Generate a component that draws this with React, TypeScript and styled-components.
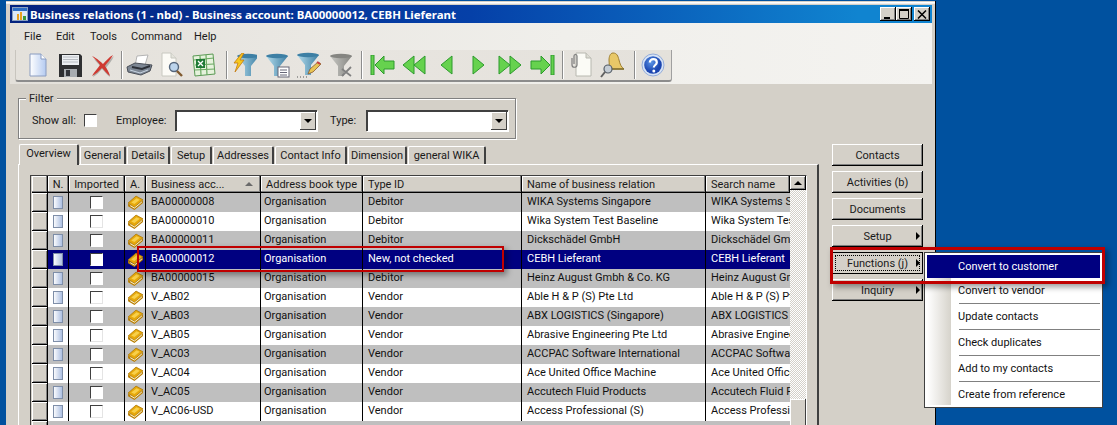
import React from "react";
import styled, { createGlobalStyle } from "styled-components";

const Global = createGlobalStyle`
  html, body { margin: 0; padding: 0; background: #00519f; overflow: hidden; }
  * { box-sizing: border-box; }
  body { font-family: Roboto, "Liberation Sans", sans-serif; font-size: 11px; color: #000; }
`;

const Desktop = styled.div`
  position: relative;
  width: 1117px;
  height: 425px;
  overflow: hidden;
  background: #00519f;
  padding: 1px 0 0 6px;
`;
const Win = styled.div`
  width: 930px;
  height: 460px;
  background: #d4d0c8;
  border-right: 1px solid #000;
  padding: 4px 3px 0 4px;
  box-shadow: inset 0 1px #d4d0c8, inset 0 2px #fff, inset 0 3px #f0f0f0;
`;
const TitleBar = styled.div`
  height: 18px;
  display: flex;
  align-items: center;
  padding: 0 2px 0 2px;
  background: linear-gradient(90deg, #04237f 0%, #0540a8 50%, #1084d0 92%);
`;
const TitleText = styled.span`
  flex: 1;
  margin-left: 2px;
  color: #fff;
  font: 700 11.45px "Noto Sans", sans-serif;
  white-space: nowrap;
`;
const CaptionBtn = styled.button<{ $gap?: number }>`
  width: 16px;
  height: 14px;
  padding: 0;
  margin-left: ${(p) => p.$gap ?? 0}px;
  border: 0;
  background: #d4d0c8;
  box-shadow: inset -1px -1px #000, inset 1px 1px #fff, inset -2px -2px #808080;
  display: flex;
  align-items: center;
  justify-content: center;
`;
const Chrome = styled.div`
  background: linear-gradient(90deg, #e3e0da 0%, #f0efeb 60%, #f4f3f0 100%);
  height: 61px;
`;
const MenuBar = styled.div`
  height: 27px;
  display: flex;
  align-items: center;
  padding-left: 14px;
`;
const MenuLabel = styled.span<{ $w: number }>`
  width: ${(p) => p.$w}px;
  color: #1a1a1a;
`;
const ToolBar = styled.div`
  width: 657px;
  height: 32px;
  margin-left: 5px;
  display: flex;
  align-items: center;
  padding-left: 6px;
  background: linear-gradient(90deg, #e4e1db, #e8e5e0 50%, #e4e1db);
  border-right: 1px solid #a0a0a0;
  border-bottom: 2px solid #8c8c8c;
  border-left: 1px solid #c8c5be;
  border-radius: 0 0 3px 3px;
`;
const ToolSlot = styled.span`
  width: 32px;
  height: 28px;
  display: flex;
  align-items: center;
  justify-content: center;
  flex: none;
`;
const ToolSep = styled.span<{ $before: number; $after: number }>`
  width: 2px;
  height: 28px;
  flex: none;
  margin: 0 ${(p) => p.$after}px 0 ${(p) => p.$before}px;
  border-left: 1px solid #8c8c8c;
  border-right: 1px solid #fff;
`;
const Body = styled.div`
  display: flex;
  padding: 8px 0 0 8px;
`;
const LeftCol = styled.div`
  width: 801px;
  flex: none;
`;
const FilterBox = styled.fieldset`
  width: 498px;
  height: 47px;
  margin: 0 0 5px;
  padding: 0 0 0 13px;
  border: 1px solid #808080;
  box-shadow: 1px 1px #fff, inset 1px 1px #fff;
  display: flex;
  align-items: center;
`;
const FilterLegend = styled.legend`
  margin-left: -6px;
  padding: 0 3px;
  line-height: 13px;
  background: #d4d0c8;
  color: #222;
`;
const FilterRow = styled.div`
  display: flex;
  align-items: center;
  margin-top: -3px;
`;
const FieldLabel = styled.span<{ $w: number }>`
  width: ${(p) => p.$w}px;
  color: #1a1a1a;
`;
const Check = styled.span<{ $soft?: boolean }>`
  display: block;
  width: 13px;
  height: 13px;
  background: #fff;
  border-top: 1px solid #404040;
  border-left: 1px solid #404040;
  border-right: 1px solid ${(p) => (p.$soft ? "#e4e4e4" : "#fff")};
  border-bottom: 1px solid ${(p) => (p.$soft ? "#e4e4e4" : "#fff")};
`;
const Combo = styled.div<{ $mr: number }>`
  width: 142px;
  height: 21px;
  margin-right: ${(p) => p.$mr}px;
  background: #fff;
  border-top: 2px solid #404040;
  border-left: 2px solid #404040;
  box-shadow: 1px 1px #fff;
  display: flex;
  justify-content: flex-end;
  padding: 0 1px 1px 0;
`;
const ComboBtn = styled.span`
  width: 16px;
  background: #d4d0c8;
  box-shadow: inset -1px -1px #404040, inset 1px 1px #fff;
  display: flex;
  align-items: center;
  justify-content: center;
`;
const DownGlyph = styled.span`
  width: 0;
  height: 0;
  border-left: 4px solid transparent;
  border-right: 4px solid transparent;
  border-top: 4px solid #000;
`;
const Tabs = styled.div`
  height: 20px;
  display: flex;
  align-items: flex-end;
  padding-left: 1px;
`;
const Tab = styled.div<{ $w: number; $on?: boolean }>`
  width: ${(p) => p.$w}px;
  height: ${(p) => (p.$on ? 21 : 18)}px;
  margin-right: 1px;
  padding-top: 1px;
  text-align: center;
  line-height: 15px;
  color: #1a1a1a;
  white-space: nowrap;
  background: #d4d0c8;
  border-top: 1px solid #fff;
  border-left: 1px solid #fff;
  border-right: 2px solid #404040;
  border-radius: 2px 2px 0 0;
  ${(p) => (p.$on ? "margin-bottom:-1px; position:relative; z-index:1;" : "")}
`;
const Pane = styled.div`
  height: 270px;
  padding: 10px 0 0 11px;
  border-top: 1px solid #fff;
  border-left: 1px solid #fff;
  border-right: 2px solid #404040;
`;
const GridFrame = styled.div`
  display: flex;
  width: 777px;
  height: 260px;
  border-top: 1px solid #404040;
  border-left: 1px solid #404040;
  border-right: 1px solid #fff;
  padding-left: 1px;
`;
const GridBody = styled.div`
  width: 758px;
  flex: none;
  overflow: hidden;
`;
const COLS = "16px 21px 56px 21px 115px 102px 159px 184px 84px";
const HeadRow = styled.div`
  display: grid;
  grid-template-columns: ${COLS};
  height: 17px;
  background: #000;
`;
const HeadCell = styled.div<{ $center?: boolean; $pad?: number }>`
  position: relative;
  background: #d4d0c8;
  height: 16px;
  margin-right: 1px;
  box-shadow: inset -1px -1px #808080, inset 1px 1px #fff;
  line-height: 18px;
  color: #1a1a1a;
  white-space: nowrap;
  overflow: hidden;
  padding-left: ${(p) => p.$pad ?? 5}px;
  text-align: ${(p) => (p.$center ? "center" : "left")};
  ${(p) => (p.$center ? "padding-left:0;" : "")}
`;
const SortMark = styled.span`
  position: absolute;
  right: 7px;
  top: 6px;
  width: 0;
  height: 0;
  border-left: 4px solid transparent;
  border-right: 4px solid transparent;
  border-bottom: 4px solid #6a6a6a;
`;
const Row = styled.div<{ $kind: "odd" | "even" | "sel" }>`
  display: grid;
  grid-template-columns: ${COLS};
  height: 19px;
  color: ${(p) => (p.$kind === "sel" ? "#fff" : "#111")};
  background: ${(p) => (p.$kind === "odd" ? "#bfbfbf" : p.$kind === "even" ? "#fff" : "#000080")};
`;
const RowHead = styled.div`
  background: #d4d0c8;
  box-shadow: inset -1px -1px #000, inset 1px 1px #fff, inset -2px -2px #808080;
`;
const IconCell = styled.div`
  border-right: 1px solid #000;
  display: flex;
  align-items: center;
  justify-content: center;
`;
const TextCell = styled.div<{ $pad?: number; $open?: boolean }>`
  ${(p) => (p.$open ? "" : "border-right: 1px solid #000;")}
  padding-left: ${(p) => p.$pad ?? 5}px;
  line-height: 18px;
  white-space: nowrap;
  overflow: hidden;
`;
const Scroll = styled.div`
  width: 16px;
  flex: none;
  display: flex;
  flex-direction: column;
  background-color: #fff;
  background-image: conic-gradient(#d4d0c8 25%, #fff 0 50%, #d4d0c8 0 75%, #fff 0);
  background-size: 2px 2px;
`;
const ScrollBtn = styled.div`
  height: 16px;
  background: #d4d0c8;
  box-shadow: inset -1px -1px #000, inset 1px 1px #fff, inset -2px -2px #808080;
  display: flex;
  align-items: center;
  justify-content: center;
`;
const UpGlyph = styled.span`
  width: 0;
  height: 0;
  border-left: 4px solid transparent;
  border-right: 4px solid transparent;
  border-bottom: 4px solid #000;
`;
const ScrollThumb = styled.div`
  height: 40px;
  margin-top: 209px;
  background: #d4d0c8;
  box-shadow: inset -1px -1px #404040, inset 1px 1px #fff;
`;
const SideCol = styled.div`
  width: 91px;
  margin: 52px 0 0 13px;
  display: flex;
  flex-direction: column;
  gap: 5px;
`;
const SideBtn = styled.div<{ $focus?: boolean }>`
  position: relative;
  height: 22px;
  background: #d4d0c8;
  box-shadow: ${(p) =>
    p.$focus
      ? "inset 0 0 0 1px #000"
      : "inset -1px -1px #000, inset 1px 1px #fff, inset -2px -2px #808080"};
  line-height: 23px;
  text-align: center;
  color: #1a1a1a;
  &::after {
    content: "";
    display: ${(p) => (p.$focus ? "block" : "none")};
    position: absolute;
    inset: 3px;
    border: 1px dotted #000;
  }
`;
const SideArrow = styled.span`
  position: absolute;
  right: 3px;
  top: 7px;
  width: 0;
  height: 0;
  border-top: 4px solid transparent;
  border-bottom: 4px solid transparent;
  border-left: 4px solid #000;
`;
const PopMenu = styled.div`
  position: absolute;
  left: 924px;
  top: 252px;
  width: 179px;
  height: 156px;
  padding: 2px;
  border: 1px solid #404040;
  background-color: #fff;
  background-image: linear-gradient(90deg, #fff, #d6d3cb);
  background-repeat: no-repeat;
  background-size: 24px 150px;
  background-position: 2px 2px;
  color: #111;
`;
const PopItem = styled.div<{ $on?: boolean }>`
  height: ${(p) => (p.$on ? 23 : 25)}px;
  line-height: ${(p) => (p.$on ? 24 : 26)}px;
  padding-left: 31px;
  white-space: nowrap;
  ${(p) => (p.$on ? "background:#000080; color:#fff;" : "")}
`;
const PopSep = styled.div`
  height: 1px;
  margin-left: 32px;
  background: #808080;
`;
const RedBox = styled.div<{ $x: number; $y: number; $w: number; $h: number; $t: number }>`
  position: absolute;
  left: ${(p) => p.$x}px;
  top: ${(p) => p.$y}px;
  width: ${(p) => p.$w}px;
  height: ${(p) => p.$h}px;
  border: ${(p) => p.$t}px solid #c00000;
  box-shadow: 3px 3px 6px rgba(0, 0, 0, 0.4);
  pointer-events: none;
`;

const NewDocIcon = () => (
  <svg width="24" height="26" viewBox="0 0 24 26">
    <defs><linearGradient id="nd" x1="0" x2="1"><stop offset="0" stopColor="#fff" /><stop offset="1" stopColor="#b4caf0" /></linearGradient></defs>
    <path d="M4 2h11l5 5v17H4z" fill="url(#nd)" stroke="#8a9cc0" />
    <path d="M15 2v5h5" fill="#fff" stroke="#8a9cc0" />
  </svg>
);
const SaveIcon = () => (
  <svg width="25" height="25" viewBox="0 0 25 25">
    <path d="M1 1h21l2 2v21H1z" fill="#2f3032" />
    <path d="M4 2h17v10H4z" fill="#eceff2" />
    <path d="M5 4h15M5 6.500h15M5 9h15" stroke="#b8bcc2" />
    <path d="M6 16h13v8H6z" fill="#a8acb0" />
    <path d="M8 17h4v6H8z" fill="#33353a" />
  </svg>
);
const DeleteIcon = () => (
  <svg width="26" height="24" viewBox="0 0 26 24">
    <path d="M4 5c5 2 8 5 10 7 3-3 6-7 10-10-2 5-6 9-8 12 2 3 3 5 4 9-3-2-6-6-8-8-3 3-5 6-9 8 1-4 5-8 7-11C9 10 6 8 4 5z" fill="#b0b0ac" transform="translate(1 1)" />
    <path d="M3 3c6 3 9 6 11 8 3-3 6-7 10-9-2 4-6 8-8 11 2 3 4 6 5 10-3-2-6-6-8-8-3 3-6 6-10 8 2-4 6-8 8-11C9 9 6 6 3 3z" fill="#cf3a32" />
  </svg>
);
const PrintIcon = () => (
  <svg width="28" height="24" viewBox="0 0 28 24">
    <path d="M11 3l11-1-3 10-10 1z" fill="#fff" stroke="#b4b4b4" />
    <path d="M1 14l8-4 17 2-2 6-9 4-13-3z" fill="#7d8794" stroke="#4a4f58" />
    <path d="M6 14l10 2 8-3" fill="none" stroke="#2c3038" strokeWidth="2" />
    <path d="M4 17l10 3 8-3" fill="none" stroke="#c8d4e2" />
  </svg>
);
const PreviewIcon = () => (
  <svg width="24" height="26" viewBox="0 0 24 26">
    <path d="M2 1h9l5 5v18H2z" fill="#fcfbf6" stroke="#c8c8c0" />
    <path d="M11 1v5h5" fill="#e4e4dc" stroke="#c8c8c0" />
    <circle cx="14" cy="15" r="4.500" fill="#bcd4ec" stroke="#55667c" strokeWidth="1.400" />
    <path d="M17 19l5 5" stroke="#805a30" strokeWidth="2.400" />
  </svg>
);
const ExcelIcon = () => (
  <svg width="24" height="25" viewBox="0 0 24 25">
    <path d="M1 3l20-2 2 20-20 2z" fill="#e6f2dc" stroke="#5b9a55" />
    <path d="M2 7l20-2M3 12l19-1M3 17l20-1M8 3l1 19M14 2l1 20" stroke="#68a860" strokeWidth="1.200" />
    <path d="M4 6h9v9H4z" fill="#1f7a35" />
    <path d="M6 8l5 5M11 8l-5 5" stroke="#fff" strokeWidth="1.300" />
  </svg>
);
const Funnel = ({ c1 = "#3d7fa4", c2 = "#b4dcec", id }: { c1?: string; c2?: string; id: string }) => (
  <>
    <defs><linearGradient id={id} x1="0" x2="1"><stop offset="0" stopColor={c2} /><stop offset="1" stopColor={c1} /></linearGradient></defs>
    <path d="M1 3h22l-8 10v10h-6V13z" fill={`url(#${id})`} />
    <ellipse cx="12" cy="3" rx="11" ry="2.200" fill={c1} />
  </>
);
const FilterBoltIcon = () => (
  <svg width="24" height="24" viewBox="0 0 24 24">
    <g transform="translate(3 0)"><Funnel id="fa" /></g>
    <path d="M9 0L1 10h4l-3 9 9-12H7l4-7z" fill="#f6c81e" stroke="#c47a10" strokeWidth=".8" />
  </svg>
);
const FilterFormIcon = () => (
  <svg width="25" height="25" viewBox="0 0 25 25">
    <Funnel id="fb" />
    <rect x="13" y="14" width="11" height="10" fill="#fff" stroke="#667" />
    <path d="M15 17h7M15 19.500h7M15 22h7" stroke="#667" />
  </svg>
);
const FilterEditIcon = () => (
  <svg width="26" height="26" viewBox="0 0 26 26">
    <Funnel id="fc" />
    <path d="M12 22l2-5 8-7 3 2-8 8z" fill="#e8c454" stroke="#8a5a30" strokeWidth=".8" />
    <path d="M21 10l3 2" stroke="#c83c3c" strokeWidth="2" />
    <path d="M1 25h10" stroke="#555" strokeDasharray="1 2" />
  </svg>
);
const FilterOffIcon = () => (
  <svg width="24" height="25" viewBox="0 0 24 25">
    <Funnel id="fd" c1="#858581" c2="#c8c8c4" />
    <path d="M13 16l9 7M22 14l-9 9" stroke="#808080" strokeWidth="1.800" />
  </svg>
);
const G = { fill: "#66d24e", stroke: "#2c9a2c", strokeWidth: 1 };
const FirstIcon = () => (
  <svg width="25" height="20" viewBox="0 0 25 20">
    <path d="M1 0h3v20H1z" {...G} />
    <path d="M5 10l9-9v5h10v8H14v5z" {...G} />
  </svg>
);
const PrevPageIcon = () => (
  <svg width="24" height="20" viewBox="0 0 24 20">
    <path d="M1 10L12 1v18z" {...G} /><path d="M12 10L23 1v18z" {...G} />
  </svg>
);
const PrevIcon = () => (
  <svg width="13" height="20" viewBox="0 0 13 20"><path d="M1 10L12 1v18z" {...G} /></svg>
);
const NextIcon = () => (
  <svg width="13" height="20" viewBox="0 0 13 20"><path d="M12 10L1 1v18z" {...G} /></svg>
);
const NextPageIcon = () => (
  <svg width="24" height="20" viewBox="0 0 24 20">
    <path d="M12 10L1 1v18z" {...G} /><path d="M23 10L12 1v18z" {...G} />
  </svg>
);
const LastIcon = () => (
  <svg width="25" height="20" viewBox="0 0 25 20">
    <path d="M21 0h3v20h-3z" {...G} />
    <path d="M20 10l-9-9v5H1v8h10v5z" {...G} />
  </svg>
);
const AttachIcon = () => (
  <svg width="22" height="26" viewBox="0 0 22 26">
    <path d="M6 1h10l5 5v18H6z" fill="#fbfbf6" stroke="#b8b8b0" />
    <path d="M16 1v5h5" fill="#dcdcd4" stroke="#b8b8b0" />
    <path d="M2 6v7c0 3 5 3 5 0V4c0-2-3-2-3 0v8" fill="none" stroke="#7c7c7c" strokeWidth="1.200" />
  </svg>
);
const BellIcon = () => (
  <svg width="26" height="26" viewBox="0 0 26 26">
    <path d="M13 1c4 0 5 3 6 7s2 7 5 9H8c2-3 1-6 1-9s1-7 4-7z" fill="#e8c868" stroke="#a08030" />
    <path d="M8 17h16" stroke="#807030" strokeWidth="1.500" />
    <circle cx="8" cy="17" r="4" fill="#c4ccd4" stroke="#555e68" strokeWidth="1.200" />
    <path d="M5 20l-4 5" stroke="#606060" strokeWidth="2" />
  </svg>
);
const HelpIcon = () => (
  <svg width="24" height="24" viewBox="0 0 24 24">
    <defs><radialGradient id="hb" cx=".4" cy=".35"><stop offset="0" stopColor="#5a94e6" /><stop offset="1" stopColor="#1c46b0" /></radialGradient></defs>
    <circle cx="12" cy="12" r="11" fill="#d8e4f6" stroke="#94acd8" />
    <circle cx="12" cy="12" r="8.800" fill="url(#hb)" />
    <path d="M8.800 9.500c0-4.500 7-4.500 7 0 0 2.500-3 2.500-3 5" fill="none" stroke="#fff" strokeWidth="2.200" />
    <circle cx="12.800" cy="18" r="1.500" fill="#fff" />
  </svg>
);
const AppIcon = () => (
  <svg width="16" height="16" viewBox="0 0 16 16">
    <rect x=".5" y="1.500" width="15" height="13" fill="#dce8f6" stroke="#8aa0c0" />
    <path d="M1 2h14v3H1z" fill="#2f6fc4" />
    <path d="M5 14V8h2v6zM8 14V6h2v8z" fill="#e8a020" />
    <path d="M11 14v-4h3v4z" fill="#3c9a3c" />
  </svg>
);
const MinGlyph = () => <svg width="10" height="10" viewBox="0 0 10 10"><path d="M1 8h6v2H1z" /></svg>;
const MaxGlyph = () => <svg width="10" height="10" viewBox="0 0 10 10"><path d="M.5 1.500h9v8h-9z" fill="none" stroke="#000" /><path d="M0 0h10v2H0z" /></svg>;
const CloseGlyph = () => <svg width="10" height="9" viewBox="0 0 10 9"><path d="M1 .5l8 8M9 .5l-8 8" stroke="#000" strokeWidth="1.500" /></svg>;
const RowDocIcon = () => (
  <svg width="10" height="13" viewBox="0 0 10 13">
    <defs><linearGradient id="rd" x1="0" x2="1"><stop offset="0" stopColor="#fff" /><stop offset="1" stopColor="#a8bce0" /></linearGradient></defs>
    <rect x=".5" y=".5" width="9" height="12" fill="url(#rd)" stroke="#7e8ea8" />
  </svg>
);
const BookIcon = () => (
  <svg width="17" height="16" viewBox="0 0 16 15">
    <path d="M1 7.500L8.500 1 15 4.500l-8 7z" fill="#e6a80c" stroke="#a87404" strokeWidth=".7" strokeLinejoin="round" />
    <path d="M4 7l5-4 3 1.500-5 4z" fill="#f8d04a" />
    <path d="M1 8l6 4 8-7v2.500l-8 6.500-6-3.500z" fill="#b87e04" />
    <path d="M3 10l4 2.300 7-5.800" stroke="#fff6d0" strokeWidth=".9" fill="none" />
  </svg>
);

type RowData = [string, string, string, string, string];
const rows: RowData[] = [
  ["BA00000008", "Organisation", "Debitor", "WIKA Systems Singapore", "WIKA Systems Singapore"],
  ["BA00000010", "Organisation", "Debitor", "Wika System Test Baseline", "Wika System Test Baseline"],
  ["BA00000011", "Organisation", "Debitor", "Dickschädel GmbH", "Dickschädel GmbH"],
  ["BA00000012", "Organisation", "New, not checked", "CEBH Lieferant", "CEBH Lieferant"],
  ["BA00000015", "Organisation", "Debitor", "Heinz August Gmbh & Co. KG", "Heinz August Gmbh & Co. KG"],
  ["V_AB02", "Organisation", "Vendor", "Able H & P (S) Pte Ltd", "Able H & P (S) Pte Ltd"],
  ["V_AB03", "Organisation", "Vendor", "ABX LOGISTICS (Singapore)", "ABX LOGISTICS (Singapore)"],
  ["V_AB05", "Organisation", "Vendor", "Abrasive Engineering Pte Ltd", "Abrasive Engineering Pte Ltd"],
  ["V_AC03", "Organisation", "Vendor", "ACCPAC Software International", "ACCPAC Software International"],
  ["V_AC04", "Organisation", "Vendor", "Ace United Office Machine", "Ace United Office Machine"],
  ["V_AC05", "Organisation", "Vendor", "Accutech Fluid Products", "Accutech Fluid Products"],
  ["V_AC06-USD", "Organisation", "Vendor", "Access Professional (S)", "Access Professional (S)"],
];

const tabs: [string, number][] = [
  ["General", 46], ["Details", 43], ["Setup", 41], ["Addresses", 61],
  ["Contact Info", 72], ["Dimension", 59], ["general WIKA", 78],
];
const menus: [string, number][] = [["File", 32], ["Edit", 34], ["Tools", 41], ["Command", 63], ["Help", 40]];
const popItems = ["Convert to vendor", "Update contacts", "Check duplicates", "Add to my contacts", "Create from reference"];

export default function App() {
  return (
    <Desktop>
      <Global />
      <Win>
        <TitleBar>
          <AppIcon />
          <TitleText>Business relations (1 - nbd) - Business account: BA00000012, CEBH Lieferant</TitleText>
          <CaptionBtn><MinGlyph /></CaptionBtn>
          <CaptionBtn><MaxGlyph /></CaptionBtn>
          <CaptionBtn $gap={2}><CloseGlyph /></CaptionBtn>
        </TitleBar>
        <Chrome>
          <MenuBar>
            {menus.map(([m, w]) => <MenuLabel key={m} $w={w}>{m}</MenuLabel>)}
          </MenuBar>
          <ToolBar>
            <ToolSlot><NewDocIcon /></ToolSlot>
            <ToolSlot><SaveIcon /></ToolSlot>
            <ToolSlot><DeleteIcon /></ToolSlot>
            <ToolSep $before={3} $after={1} />
            <ToolSlot><PrintIcon /></ToolSlot>
            <ToolSlot><PreviewIcon /></ToolSlot>
            <ToolSlot><ExcelIcon /></ToolSlot>
            <ToolSep $before={6} $after={1} />
            <ToolSlot><FilterBoltIcon /></ToolSlot>
            <ToolSlot><FilterFormIcon /></ToolSlot>
            <ToolSlot><FilterEditIcon /></ToolSlot>
            <ToolSlot><FilterOffIcon /></ToolSlot>
            <ToolSep $before={4} $after={3} />
            <ToolSlot><FirstIcon /></ToolSlot>
            <ToolSlot><PrevPageIcon /></ToolSlot>
            <ToolSlot><PrevIcon /></ToolSlot>
            <ToolSlot><NextIcon /></ToolSlot>
            <ToolSlot><NextPageIcon /></ToolSlot>
            <ToolSlot><LastIcon /></ToolSlot>
            <ToolSep $before={4} $after={1} />
            <ToolSlot><AttachIcon /></ToolSlot>
            <ToolSlot><BellIcon /></ToolSlot>
            <ToolSep $before={5} $after={1} />
            <ToolSlot><HelpIcon /></ToolSlot>
          </ToolBar>
        </Chrome>
        <Body>
          <LeftCol>
            <FilterBox>
              <FilterLegend>Filter</FilterLegend>
              <FilterRow>
                <FieldLabel $w={52}>Show all:</FieldLabel>
                <Check />
                <FieldLabel $w={19} />
                <FieldLabel $w={59}>Employee:</FieldLabel>
                <Combo $mr={13}><ComboBtn><DownGlyph /></ComboBtn></Combo>
                <FieldLabel $w={36}>Type:</FieldLabel>
                <Combo $mr={0}><ComboBtn><DownGlyph /></ComboBtn></Combo>
              </FilterRow>
            </FilterBox>
            <Tabs>
              <Tab $w={60} $on>Overview</Tab>
              {tabs.map(([t, w]) => <Tab key={t} $w={w}>{t}</Tab>)}
            </Tabs>
            <Pane>
              <GridFrame>
                <GridBody>
                  <HeadRow>
                    <HeadCell />
                    <HeadCell $center>N.</HeadCell>
                    <HeadCell $center>Imported</HeadCell>
                    <HeadCell $center>A.</HeadCell>
                    <HeadCell>Business acc...<SortMark /></HeadCell>
                    <HeadCell>Address book type</HeadCell>
                    <HeadCell>Type ID</HeadCell>
                    <HeadCell>Name of business relation</HeadCell>
                    <HeadCell>Search name</HeadCell>
                  </HeadRow>
                  {rows.map((r, i) => {
                    const sel = i === 3;
                    return (
                      <Row key={r[0]} $kind={sel ? "sel" : i % 2 === 0 ? "odd" : "even"}>
                        <RowHead />
                        <IconCell><RowDocIcon /></IconCell>
                        <IconCell><Check $soft={!sel && i % 2 === 1} /></IconCell>
                        <IconCell><BookIcon /></IconCell>
                        <TextCell>{r[0]}</TextCell>
                        <TextCell $pad={3}>{r[1]}</TextCell>
                        <TextCell>{r[2]}</TextCell>
                        <TextCell>{r[3]}</TextCell>
                        <TextCell $open>{r[4]}</TextCell>
                      </Row>
                    );
                  })}
                  <Row $kind="odd"><RowHead /></Row>
                </GridBody>
                <Scroll>
                  <ScrollBtn><UpGlyph /></ScrollBtn>
                  <ScrollThumb />
                </Scroll>
              </GridFrame>
            </Pane>
          </LeftCol>
          <SideCol>
            <SideBtn>Contacts</SideBtn>
            <SideBtn>Activities (b)</SideBtn>
            <SideBtn>Documents</SideBtn>
            <SideBtn>Setup<SideArrow /></SideBtn>
            <SideBtn $focus>Functions (j)<SideArrow /></SideBtn>
            <SideBtn>Inquiry<SideArrow /></SideBtn>
          </SideCol>
        </Body>
      </Win>
      <RedBox $x={137} $y={246} $w={367} $h={26} $t={2} />
      <PopMenu>
        <PopItem $on>Convert to customer</PopItem>
        {popItems.map((t, i) => (
          <React.Fragment key={t}>
            {i > 0 && <PopSep />}
            <PopItem>{t}</PopItem>
          </React.Fragment>
        ))}
      </PopMenu>
      <RedBox $x={830} $y={247} $w={275} $h={37} $t={3} />
    </Desktop>
  );
}
